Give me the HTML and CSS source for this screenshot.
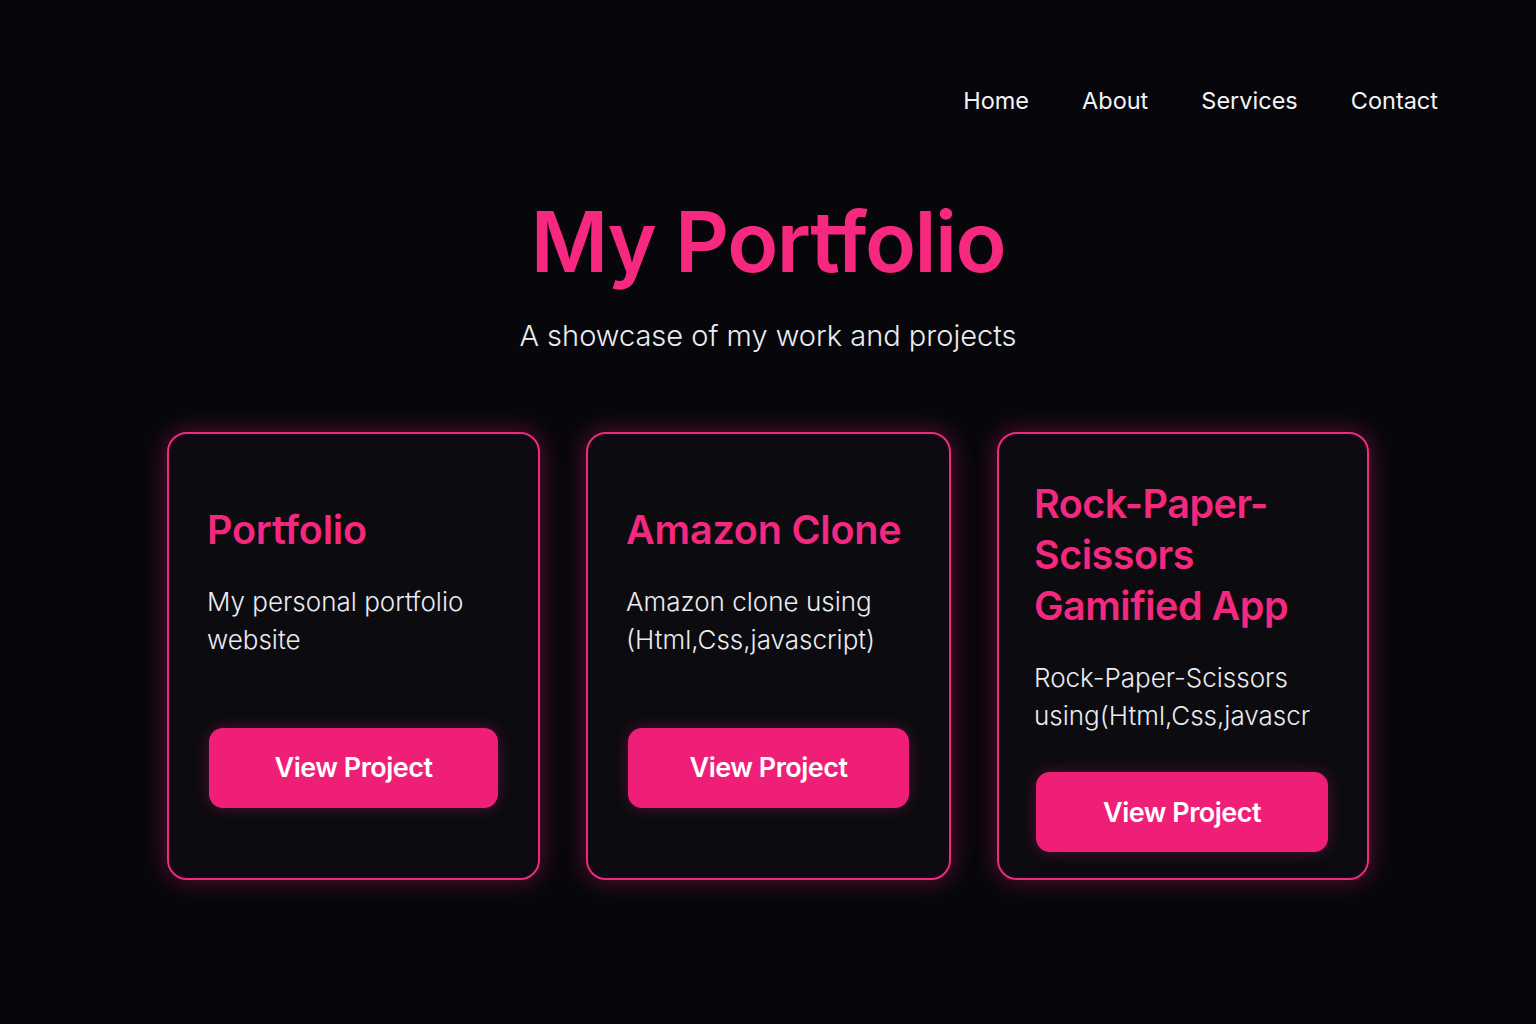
FILE: index.html
```html
<!DOCTYPE html>
<html lang="en">
<head>
<meta charset="utf-8">
<title>My Portfolio</title>
<link rel="stylesheet" href="styles.css">
</head>
<body>
<header class="nav">
  <a class="nav-link" href="#">Home</a>
  <a class="nav-link" href="#">About</a>
  <a class="nav-link" href="#">Services</a>
  <a class="nav-link" href="#">Contact</a>
</header>
<section class="hero">
  <h1 class="hero-title">My Portfolio</h1>
  <p class="hero-sub">A showcase of my work and projects</p>
</section>
<main class="cards">
  <article class="card">
    <h2 class="card-title">Portfolio</h2>
    <p class="card-desc card-desc--tall">My personal portfolio website</p>
    <a class="btn" href="#">View Project</a>
  </article>
  <article class="card">
    <h2 class="card-title">Amazon Clone</h2>
    <p class="card-desc card-desc--tall">Amazon clone using (Html,Css,javascript)</p>
    <a class="btn" href="#">View Project</a>
  </article>
  <article class="card card--long">
    <h2 class="card-title">Rock-Paper-Scissors Gamified App</h2>
    <p class="card-desc">Rock-Paper-Scissors using(Html,Css,javascr</p>
    <a class="btn" href="#">View Project</a>
  </article>
</main>
</body>
</html>
```
FILE: styles.css
```css
* { box-sizing: border-box; }
html, body {
  margin: 0;
  background: #07070b;
  color: #ececf0;
  font-family: Inter, "Noto Sans", "Liberation Sans", sans-serif;
}
body { min-height: 1024px; }

.nav {
  display: flex;
  justify-content: flex-end;
  gap: 53px;
  padding: 86px 98px 0;
}
.nav-link {
  color: #f4f4f6;
  text-decoration: none;
  font-size: 23.5px;
  line-height: 30px;
  font-weight: 400;
}

.hero { text-align: center; }
.hero-title {
  margin: 76px 0 0;
  font-size: 84px;
  line-height: 100px;
  font-weight: 600;
  color: #f7287f;
  letter-spacing: -1.5px;
}
.hero-sub {
  margin: 26px 0 0;
  font-size: 29px;
  line-height: 36px;
  font-weight: 300;
  color: #ececf0;
}

.cards {
  display: grid;
  grid-template-columns: 373px 365px 372px;
  column-gap: 46px;
  justify-content: center;
  margin-top: 78px;
}
.card {
  display: flex;
  flex-direction: column;
  justify-content: center;
  height: 448px;
  padding: 0 38px;
  background: #0b0b10;
  border: 2px solid #ef2a7e;
  border-radius: 20px;
  box-shadow: 0 0 24px rgba(240, 30, 120, 0.38), inset 0 0 20px rgba(240, 30, 120, 0.05);
}
.card--long { padding: 19px 37px 0 35px; }
.card-title {
  margin: 0;
  font-size: 39.5px;
  line-height: 51px;
  font-weight: 600;
  color: #f5287f;
  letter-spacing: -0.2px;
}
.card--long .card-title { letter-spacing: -0.5px; }
.card-desc {
  margin: 27px 0 37px;
  font-size: 26px;
  line-height: 38px;
  font-weight: 300;
  color: #ececf0;
}
.card-desc--tall { margin-bottom: 69px; }

.btn {
  display: flex;
  align-items: center;
  justify-content: center;
  height: 80px;
  margin: 0 2px;
  border-radius: 14px;
  background: #ef1f78;
  color: #ffffff;
  text-decoration: none;
  font-size: 27px;
  font-weight: 600;
  letter-spacing: -0.5px;
  box-shadow: 0 0 16px rgba(240, 30, 120, 0.3);
}
```
